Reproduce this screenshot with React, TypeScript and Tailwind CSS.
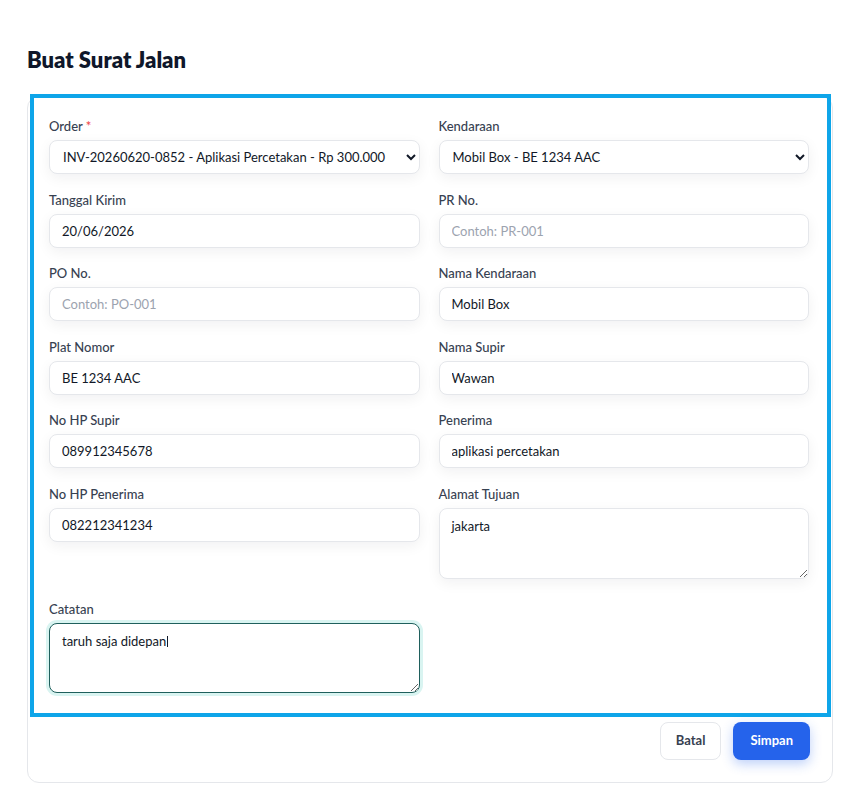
import { useEffect, useRef } from "react";

const inputCls =
  "w-full h-[34px] px-3 rounded-lg border border-[#e5e7eb] bg-white text-[13px] text-[#111827] placeholder:text-[#9ca3af] shadow-[0_4px_14px_rgba(15,23,42,0.06)] outline-none";

function Label({ children, required }: { children: string; required?: boolean }) {
  return (
    <label className="block h-[20px] mb-1 text-[13px] leading-[20px] font-medium text-[#374151]">
      {children}
      {required && <span className="text-[#ef4444]"> *</span>}
    </label>
  );
}

function Field({ label, value, placeholder }: { label: string; value?: string; placeholder?: string }) {
  return (
    <div>
      <Label>{label}</Label>
      <input className={inputCls} defaultValue={value} placeholder={placeholder} />
    </div>
  );
}

export default function App() {
  const noteRef = useRef<HTMLTextAreaElement>(null);

  useEffect(() => {
    const el = noteRef.current;
    if (el) {
      el.focus();
      el.setSelectionRange(el.value.length, el.value.length);
    }
  }, []);

  return (
    <div className="min-h-screen bg-white px-[27px] pt-[45px] font-['Lato','Noto_Sans',sans-serif]">
      <h1 className="text-[22px] leading-[30px] font-extrabold text-[#0f172a]">
        Buat Surat Jalan
      </h1>

      <div className="mt-[21px] w-[806px] rounded-xl border border-[#e5e7eb] pb-[22px]">
        {/* form */}
        <div className="-mt-[3px] ml-[2px] mr-[1px] border-4 border-[#0ea5e9] pl-[15px] pr-[18px] pt-[18px] pb-[20px]">
          <div className="grid grid-cols-2 gap-x-[19px] gap-y-[15.5px]">
            <div>
              <Label required>Order</Label>
              <select className={inputCls + " pl-[9px]"} defaultValue="inv">
                <option value="inv">INV-20260620-0852 - Aplikasi Percetakan - Rp 300.000</option>
              </select>
            </div>
            <div>
              <Label>Kendaraan</Label>
              <select className={inputCls + " pl-[9px]"} defaultValue="box">
                <option value="box">Mobil Box - BE 1234 AAC</option>
              </select>
            </div>

            <Field label="Tanggal Kirim" value="20/06/2026" />
            <Field label="PR No." placeholder="Contoh: PR-001" />

            <Field label="PO No." placeholder="Contoh: PO-001" />
            <Field label="Nama Kendaraan" value="Mobil Box" />

            <Field label="Plat Nomor" value="BE 1234 AAC" />
            <Field label="Nama Supir" value="Wawan" />

            <Field label="No HP Supir" value="089912345678" />
            <Field label="Penerima" value="aplikasi percetakan" />

            <Field label="No HP Penerima" value="082212341234" />
            <div>
              <Label>Alamat Tujuan</Label>
              <textarea
                className="block w-full h-[71px] px-3 py-2 rounded-lg border border-[#e5e7eb] bg-white text-[13px] text-[#111827] shadow-[0_4px_14px_rgba(15,23,42,0.06)] outline-none"
                defaultValue="jakarta"
              />
            </div>

            <div className="mt-[5px]">
              <Label>Catatan</Label>
              <div className="relative">
                <textarea
                  ref={noteRef}
                  className="block w-full h-[70px] px-3 py-2 rounded-lg border border-[#1f5f5c] bg-white text-[13px] text-[#111827] shadow-[0_0_0_3px_rgba(20,184,166,0.16)] outline-none caret-transparent"
                  defaultValue="taruh saja didepan"
                />
                {/* caret */}
                <span className="pointer-events-none absolute left-[118px] top-[13px] h-[11px] w-px bg-[#111827]" />
              </div>
            </div>
          </div>
        </div>

        {/* actions */}
        <div className="flex justify-end gap-3 pr-[22px] pt-[5px]">
          <button className="h-[38px] px-[15px] rounded-lg border border-[#e5e7eb] bg-white text-[13px] font-bold text-[#374151]">
            Batal
          </button>
          <button className="h-[38px] px-[17px] rounded-lg bg-[#2563eb] text-[13px] font-bold text-white shadow-[0_4px_12px_rgba(37,99,235,0.3)]">
            Simpan
          </button>
        </div>
      </div>
    </div>
  );
}
